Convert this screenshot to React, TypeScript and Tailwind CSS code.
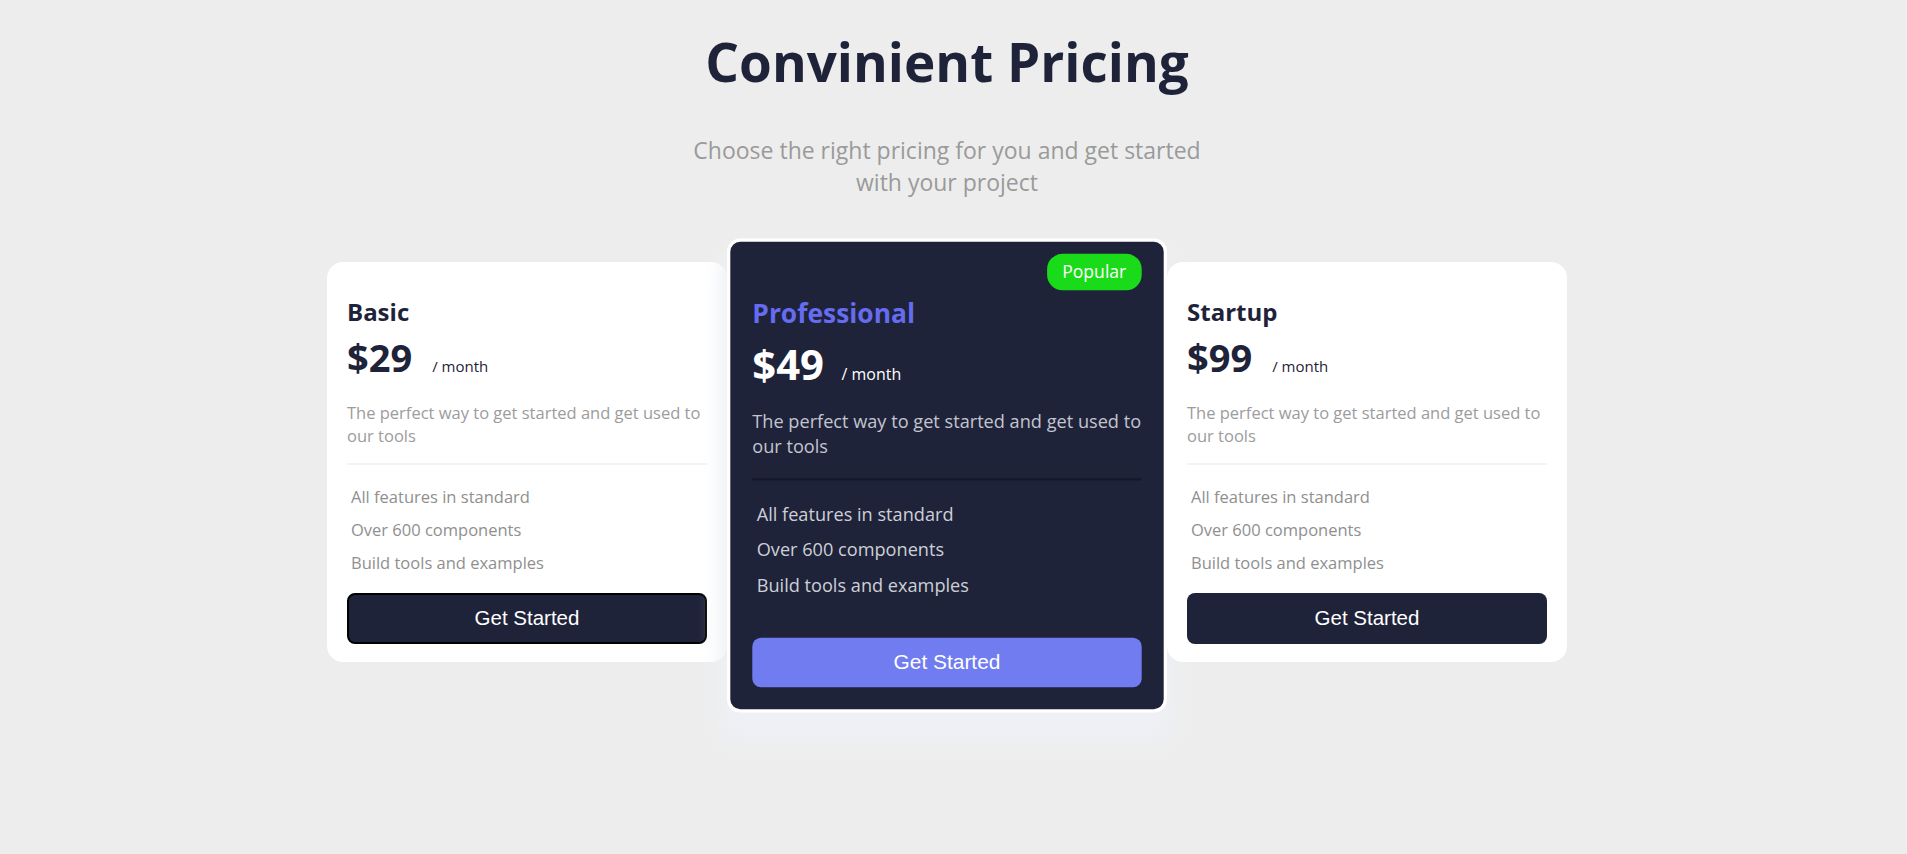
import React from 'react';

const features = ['All features in standard', 'Over 600 components', 'Build tools and examples'];

const PlanCard: React.FC<{ name: string; price: string; focused?: boolean; raised?: boolean }> = ({
  name,
  price,
  focused,
  raised,
}) => {
  return (
    <div
      className={`w-[400px] shrink-0 bg-white rounded-2xl px-5 pt-[34px] pb-[18px] flex flex-col ${raised ? 'relative z-20' : ''}`}
    >
      <h3 className="text-2xl leading-8 font-bold text-[#1f2339]">{name}</h3>
      <div className="mt-[9px] flex items-baseline h-10">
        <span className="text-[38px] leading-10 font-bold text-[#1f2339]">{price}</span>
        <span className="ml-5 text-[15px] text-[#1f2339]">/ month</span>
      </div>
      <p className="mt-6 text-[16.5px] leading-[23px] text-[#9c9c9c]">
        The perfect way to get started and get used to our tools
      </p>
      <div className="mt-4 h-[2px] bg-[#f3f3f3]" />
      <ul className="mt-5 pl-1 flex flex-col gap-[9px]">
        {features.map((f) => (
          <li key={f} className="text-[16.5px] leading-6 text-[#8f8f8f]">{f}</li>
        ))}
      </ul>
      <button
        className={`mt-[18px] h-[51px] rounded-lg bg-[#1f2339] text-white text-[20.5px] font-['Liberation_Sans',Arial,sans-serif] ${focused ? 'border-2 border-black' : ''}`}
      >
        Get Started
      </button>
    </div>
  );
};

const ProCard: React.FC = () => {
  return (
    <div className="w-[400px] shrink-0 -mt-[2px] scale-110 bg-[#1f2339] border-[3px] border-white rounded-xl px-5 pt-[11px] pb-5 flex flex-col shadow-[0_20px_18px_6px_rgb(238,240,245)] relative z-10">
      <span className="self-end h-[33px] px-[14px] rounded-[14px] bg-[#19db19] text-white text-base leading-[33px]">
        Popular
      </span>
      <h3 className="mt-[5px] text-2xl leading-8 font-bold text-[#666cf0]">Professional</h3>
      <div className="mt-[10px] flex items-baseline h-10">
        <span className="text-[38px] leading-10 font-bold text-white">$49</span>
        <span className="ml-4 text-[14.5px] text-white">/ month</span>
      </div>
      <p className="mt-5 text-[16.5px] leading-[23px] text-[#c3c5d0]">
        The perfect way to get started and get used to our tools
      </p>
      <div className="mt-[18px] h-[2px] bg-[#15182a]" />
      <ul className="mt-[19px] pl-1 flex flex-col gap-2">
        {features.map((f) => (
          <li key={f} className="text-[16.5px] leading-6 text-[#cdcfd8]">{f}</li>
        ))}
      </ul>
      <button className="mt-[36px] h-[45px] rounded-lg bg-[#707cf0] text-white text-[19px] font-['Liberation_Sans',Arial,sans-serif]">
        Get Started
      </button>
    </div>
  );
};

export default function App() {
  return (
    <div className="min-h-screen bg-[#ededed] font-['Open_Sans',sans-serif] pr-[13px] pt-[30px] pb-24 flex flex-col items-center">
      <h1 className="text-[53px] leading-[64px] font-bold text-[#1f2339]">Convinient Pricing</h1>
      <p className="mt-10 max-w-[520px] text-center text-[23px] leading-8 text-[#9a9a9a]">
        Choose the right pricing for you and get started with your project
      </p>
      <div className="mt-[64px] flex items-start gap-5">
        <PlanCard name="Basic" price="$29" focused />
        <ProCard />
        <PlanCard name="Startup" price="$99" raised />
      </div>
    </div>
  );
}
